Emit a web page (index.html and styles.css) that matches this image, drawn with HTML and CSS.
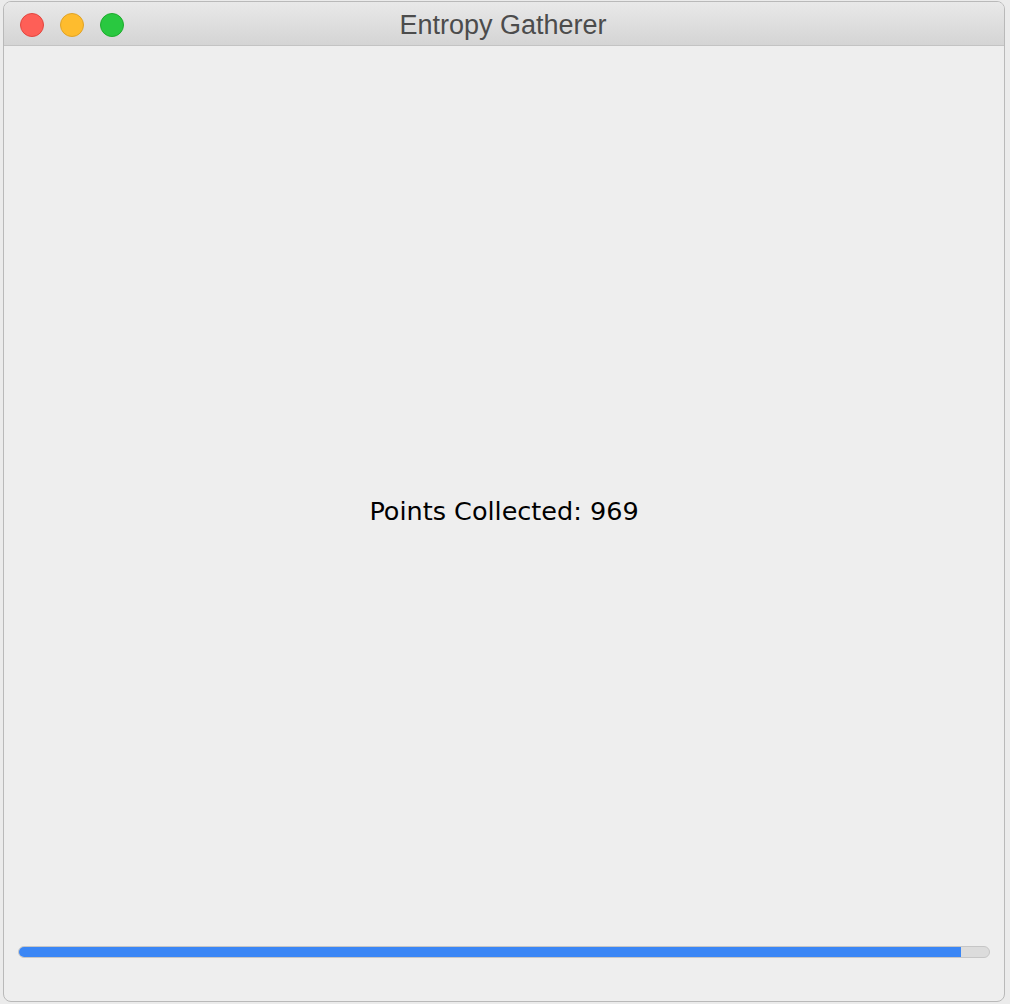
FILE: index.html
```html
<!DOCTYPE html>
<html>
<head>
<meta charset="utf-8">
<link rel="stylesheet" href="styles.css">
</head>
<body>
<div class="window">
  <div class="titlebar">
    <div class="lights">
      <span class="light red"></span>
      <span class="light yellow"></span>
      <span class="light green"></span>
    </div>
    <div class="title">Entropy Gatherer</div>
  </div>
  <div class="content">
    <div class="main">
      <div class="label">Points Collected: 969</div>
    </div>
    <div class="progress">
      <div class="fill" style="width: 97.1%"></div>
    </div>
  </div>
</div>
</body>
</html>
```
FILE: styles.css
```css
html, body {
  margin: 0;
  padding: 0;
  background: #ebebeb;
  width: 1010px;
  height: 1004px;
  overflow: hidden;
}
.window {
  margin: 1px 0 0 3px;
  width: 1000px;
  height: 999px;
  border: 1px solid #b9b9b9;
  border-radius: 8px;
  overflow: hidden;
  display: flex;
  flex-direction: column;
  background: #eeeeee;
  box-sizing: content-box;
}
.titlebar {
  position: relative;
  height: 43px;
  flex: none;
  background: linear-gradient(#e9e9e9, #d4d4d4);
  border-bottom: 1px solid #c3c3c3;
  display: flex;
  align-items: center;
  justify-content: center;
}
.lights {
  position: absolute;
  left: 16px;
  top: 11px;
  display: flex;
  gap: 16px;
}
.light {
  width: 22px;
  height: 22px;
  border-radius: 50%;
  border: 1px solid;
}
.red { background: #fe5f57; border-color: #e2463f; }
.yellow { background: #febc2e; border-color: #e0a326; }
.green { background: #29c840; border-color: #1dac2c; }
.title {
  font-family: "Liberation Sans", Arial, sans-serif;
  font-size: 27px;
  color: #4c4c4c;
  margin-top: 3px;
  margin-left: -2px;
}
.content {
  flex: 1;
  display: flex;
  flex-direction: column;
}
.main {
  flex: 1;
  display: flex;
  align-items: center;
  justify-content: center;
  padding-top: 30px;
}
.label {
  font-family: "DejaVu Sans", "Lucida Grande", sans-serif;
  font-size: 25.5px;
  color: #000;
}
.progress {
  flex: none;
  margin: 0 14px 43px 14px;
  height: 10px;
  border: 1px solid #c6c6c6;
  border-radius: 6px;
  background: #dcdcdc;
  overflow: hidden;
}
.fill {
  height: 100%;
  background: #3a86f5;
}
```
